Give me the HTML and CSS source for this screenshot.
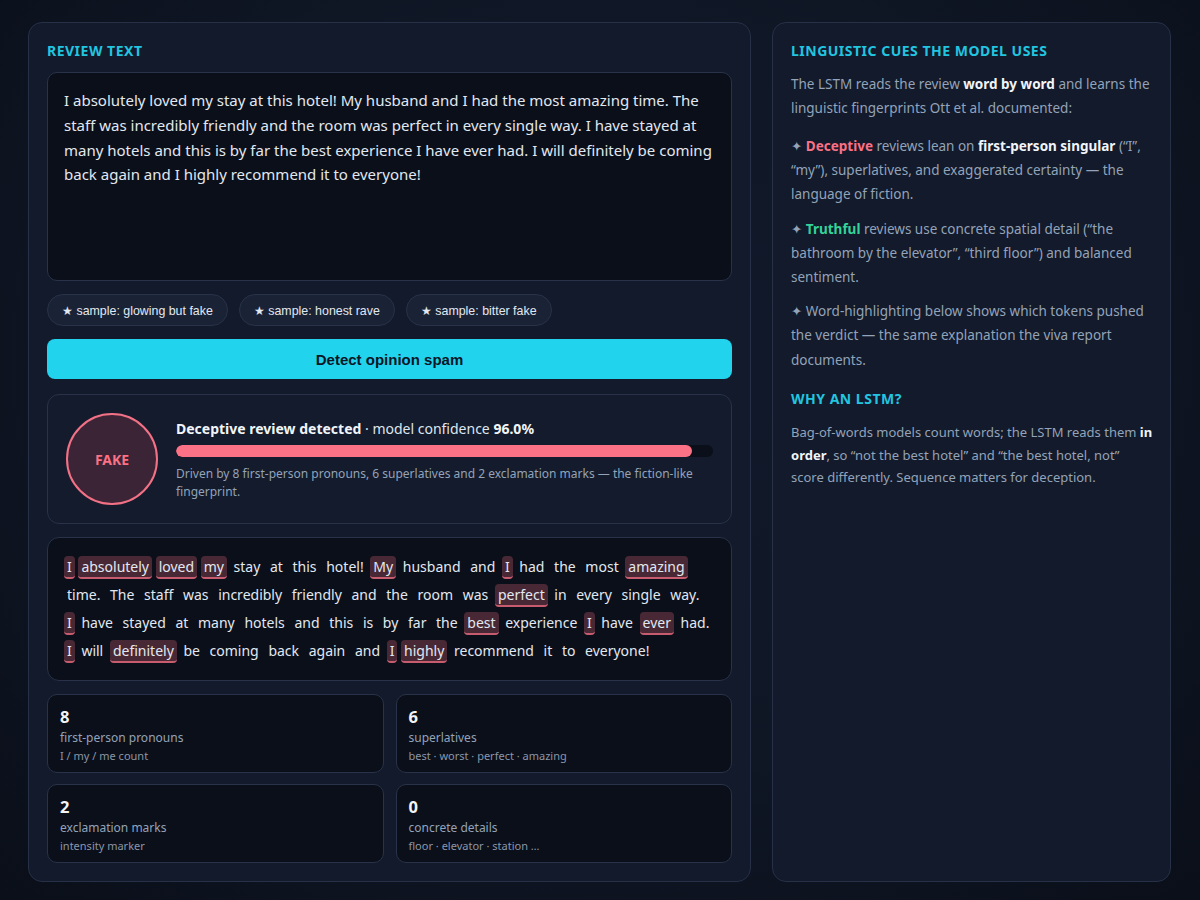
FILE: index.html
```html
<!DOCTYPE html>
<html lang="en">
<head>
<meta charset="utf-8">
<title>Opinion spam detector</title>
<link rel="stylesheet" href="styles.css">
</head>
<body>
<div class="page">
  <section class="panel main">
    <h2 class="title">REVIEW TEXT</h2>
    <div class="review">I absolutely loved my stay at this hotel! My husband and I had the most amazing time. The staff was incredibly friendly and the room was perfect in every single way. I have stayed at many hotels and this is by far the best experience I have ever had. I will definitely be coming back again and I highly recommend it to everyone!</div>
    <div class="chips">
      <button class="chip">★ sample: glowing but fake</button>
      <button class="chip">★ sample: honest rave</button>
      <button class="chip">★ sample: bitter fake</button>
    </div>
    <button class="detect">Detect opinion spam</button>
    <div class="result">
      <div class="verdict">FAKE</div>
      <div class="result-body">
        <div class="headline"><b>Deceptive review detected</b> · model confidence <b>96.0%</b></div>
        <div class="bar"><div class="fill" style="width:96%"></div></div>
        <div class="reason">Driven by 8 first-person pronouns, 6 superlatives and 2 exclamation marks — the fiction-like fingerprint.</div>
      </div>
    </div>
    <div class="tokens"><span class="t hl">I</span> <span class="t hl">absolutely</span> <span class="t hl">loved</span> <span class="t hl">my</span> <span class="t">stay</span> <span class="t">at</span> <span class="t">this</span> <span class="t">hotel!</span> <span class="t hl">My</span> <span class="t">husband</span> <span class="t">and</span> <span class="t hl">I</span> <span class="t">had</span> <span class="t">the</span> <span class="t">most</span> <span class="t hl">amazing</span> <span class="t">time.</span> <span class="t">The</span> <span class="t">staff</span> <span class="t">was</span> <span class="t">incredibly</span> <span class="t">friendly</span> <span class="t">and</span> <span class="t">the</span> <span class="t">room</span> <span class="t">was</span> <span class="t hl">perfect</span> <span class="t">in</span> <span class="t">every</span> <span class="t">single</span> <span class="t">way.</span> <span class="t hl">I</span> <span class="t">have</span> <span class="t">stayed</span> <span class="t">at</span> <span class="t">many</span> <span class="t">hotels</span> <span class="t">and</span> <span class="t">this</span> <span class="t">is</span> <span class="t">by</span> <span class="t">far</span> <span class="t">the</span> <span class="t hl">best</span> <span class="t">experience</span> <span class="t hl">I</span> <span class="t">have</span> <span class="t hl">ever</span> <span class="t">had.</span> <span class="t hl">I</span> <span class="t">will</span> <span class="t hl">definitely</span> <span class="t">be</span> <span class="t">coming</span> <span class="t">back</span> <span class="t">again</span> <span class="t">and</span> <span class="t hl">I</span> <span class="t hl">highly</span> <span class="t">recommend</span> <span class="t">it</span> <span class="t">to</span> <span class="t">everyone!</span></div>
    <div class="stats">
      <div class="stat"><div class="num">8</div><div class="label">first-person pronouns</div><div class="sub">I / my / me count</div></div>
      <div class="stat"><div class="num">6</div><div class="label">superlatives</div><div class="sub">best · worst · perfect · amazing</div></div>
      <div class="stat"><div class="num">2</div><div class="label">exclamation marks</div><div class="sub">intensity marker</div></div>
      <div class="stat"><div class="num">0</div><div class="label">concrete details</div><div class="sub">floor · elevator · station …</div></div>
    </div>
  </section>
  <aside class="panel side">
    <h2 class="title">LINGUISTIC CUES THE MODEL USES</h2>
    <p class="intro">The LSTM reads the review <b>word by word</b> and learns the linguistic fingerprints Ott et al. documented:</p>
    <p><span class="spark">✦</span> <b class="dec">Deceptive</b> reviews lean on <b>first-person singular</b> (“I”, “my”), superlatives, and exaggerated certainty — the language of fiction.</p>
    <p><span class="spark">✦</span> <b class="tru">Truthful</b> reviews use concrete spatial detail (“the bathroom by the elevator”, “third floor”) and balanced sentiment.</p>
    <p><span class="spark">✦</span> Word-highlighting below shows which tokens pushed the verdict — the same explanation the viva report documents.</p>
    <h2 class="title second">WHY AN LSTM?</h2>
    <p class="small">Bag-of-words models count words; the LSTM reads them <b>in order</b>, so “not the best hotel” and “the best hotel, not” score differently. Sequence matters for deception.</p>
  </aside>
</div>
</body>
</html>
```
FILE: styles.css
```css
* { box-sizing: border-box; }
html, body { margin: 0; height: 100%; }
body {
  background: radial-gradient(ellipse at 50% 40%, #121a2c 0%, #0f1624 55%, #0a0f19 100%);
  font-family: "Noto Sans", "DejaVu Sans", sans-serif;
  color: #e2e8f0;
}
.page {
  display: grid;
  grid-template-columns: 723fr 399fr;
  gap: 21px;
  padding: 22px 29px 18px 28px;
  align-items: stretch;
}
.panel {
  background: #121a2b;
  border: 1px solid #263047;
  border-radius: 14px;
  padding: 18px;
}
.side { padding-right: 15px; }
.title {
  margin: 0;
  font-size: 14px;
  line-height: 20px;
  font-weight: 700;
  letter-spacing: 0.5px;
  color: #22c5e0;
}
.review {
  margin-top: 11px;
  height: 209px;
  background: #0b0f1a;
  border: 1px solid #283248;
  border-radius: 10px;
  padding: 15px 16px;
  font-size: 15px;
  line-height: 24.8px;
  color: #e2e8f0;
}
.chips {
  display: flex;
  gap: 11px;
  margin-top: 13px;
}
.chip {
  height: 32px;
  padding: 0 14px;
  background: #1a2236;
  border: 1px solid #283248;
  border-radius: 16px;
  font-family: "Liberation Sans", Arial, sans-serif;
  font-size: 12.4px;
  color: #e2e8f0;
}
.detect {
  display: block;
  width: 100%;
  height: 40px;
  margin-top: 13px;
  background: #22d3ee;
  border: none;
  border-radius: 8px;
  font-family: "Liberation Sans", Arial, sans-serif;
  font-size: 15px;
  font-weight: 700;
  color: #0b1626;
}
.result {
  margin-top: 15px;
  display: flex;
  align-items: center;
  gap: 18px;
  padding: 18px;
  background: #131b2c;
  border: 1px solid #283248;
  border-radius: 12px;
}
.verdict {
  flex: none;
  width: 92px;
  height: 92px;
  border-radius: 50%;
  border: 2px solid #f37186;
  background: #3a2435;
  display: flex;
  align-items: center;
  justify-content: center;
  font-size: 14px;
  font-weight: 700;
  color: #fb7185;
}
.result-body { flex: 1; }
.headline {
  font-size: 14px;
  line-height: 22px;
  padding-top: 1px;
  color: #dfe6ef;
}
.headline b { color: #f1f5f9; }
.bar {
  margin-top: 5px;
  height: 12px;
  background: #0b0f1a;
  border-radius: 6px;
  overflow: hidden;
}
.fill {
  height: 100%;
  background: #fb7185;
  border-radius: 6px;
}
.reason {
  margin-top: 8px;
  font-size: 12px;
  line-height: 18px;
  color: #94a3b8;
}
.tokens {
  margin-top: 13px;
  background: #0b0f1a;
  border: 1px solid #283248;
  border-radius: 12px;
  padding: 15px 16px;
  font-size: 14px;
  line-height: 28px;
  color: #e2e8f0;
}
.t { padding: 1px 3px; }
.hl {
  background: rgba(251, 113, 133, 0.26);
  border-bottom: 2px solid rgba(240, 110, 130, 0.75);
  border-radius: 4px;
}
.stats {
  margin-top: 13px;
  display: grid;
  grid-template-columns: 1fr 1fr;
  gap: 11px 12px;
}
.stat {
  height: 79px;
  background: #0b0f1a;
  border: 1px solid #283248;
  border-radius: 10px;
  padding: 10px 12px;
}
.num {
  font-size: 16.5px;
  line-height: 24px;
  font-weight: 700;
  color: #f1f5f9;
}
.label {
  font-size: 12px;
  line-height: 18px;
  color: #94a3b8;
}
.sub {
  font-size: 11px;
  line-height: 18px;
  color: #8a96a8;
}
.side p {
  margin: 0 0 10px;
  font-size: 13.5px;
  line-height: 24.2px;
  color: #94a3b8;
}
.side p.intro { margin: 11px 0 13.5px; }
.side b { color: #f1f5f9; }
.side b.dec { color: #fb7185; }
.side b.tru { color: #34d399; }
.spark { color: #94a3b8; }
.title.second { margin-top: 17px; }
.side p.small {
  margin-top: 12px;
  font-size: 13px;
  line-height: 22.8px;
}
```
